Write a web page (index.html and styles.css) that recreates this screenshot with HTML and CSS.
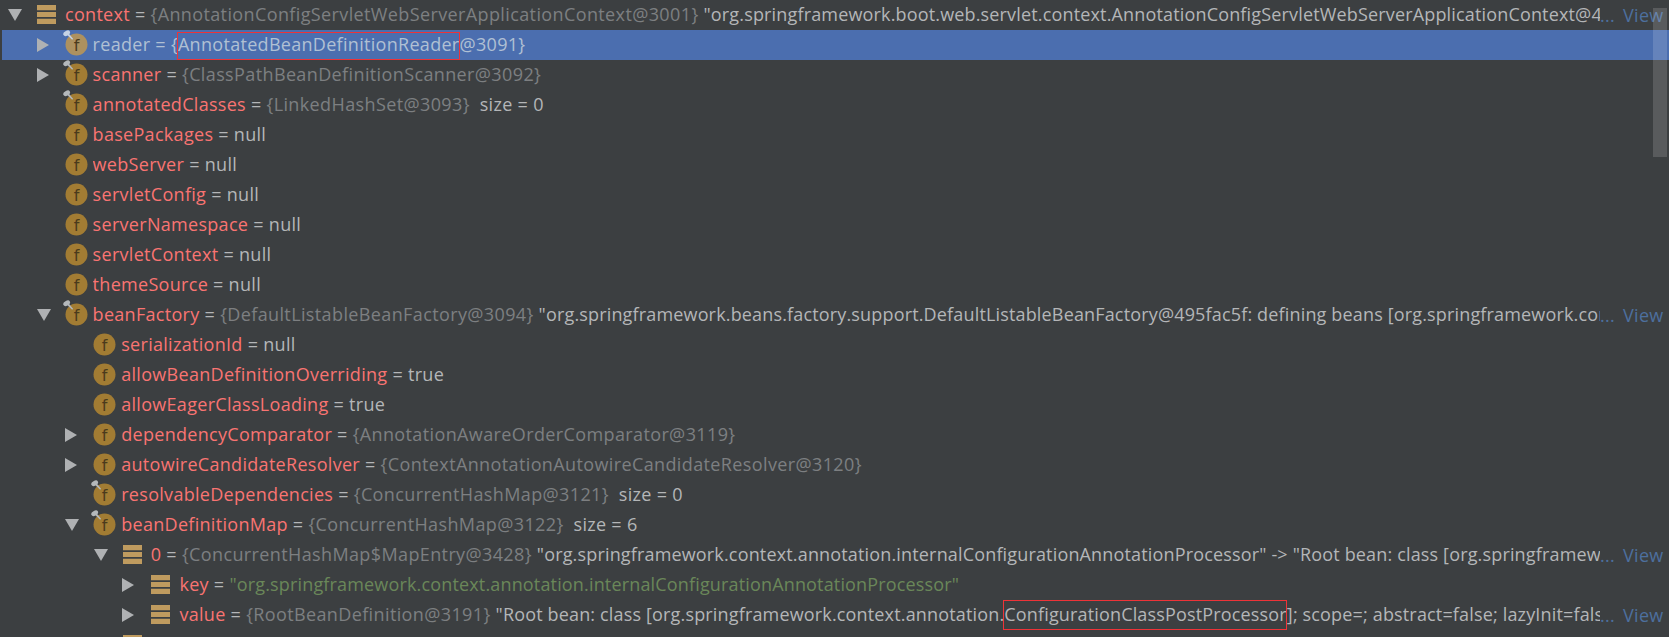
FILE: index.html
```html
<!DOCTYPE html>
<html lang="en">
<head>
<meta charset="utf-8">
<title>Variables</title>
<link rel="stylesheet" href="styles.css">
</head>
<body>
<svg class="defs" width="0" height="0" aria-hidden="true">
  <symbol id="down" viewBox="0 0 14 12"><path d="M0 0H14L7 12Z"/></symbol>
  <symbol id="right" viewBox="0 0 12 14"><path d="M0 0V14L12 7Z"/></symbol>
  <symbol id="stack" viewBox="0 0 20 20"><path d="M0 0H20V5.500H0ZM0 7.300H20V12.700H0ZM0 14.500H20V20H0Z"/></symbol>
  <symbol id="field" viewBox="0 0 24 24"><circle cx="11.500" cy="11.500" r="11"/><text class="f-glyph" x="11.500" y="17.500" text-anchor="middle">f</text></symbol>
  <symbol id="pin" viewBox="0 0 12 12"><ellipse cx="4" cy="3.500" rx="4" ry="2.600" transform="rotate(-30 4 3.500)"/><path d="M4 5 6 3.500 11 9.500 10 10.500z"/></symbol>
</svg>
<main class="tree">
  <div class="row l0"><svg class="arrow dn"><use href="#down"/></svg><svg class="stack"><use href="#stack"/></svg><span class="val"><span class="name">context</span> = <span class="ref">{AnnotationConfigServletWebServerApplicationContext@3001}</span> <span class="s">"org.springframework.boot.web.servlet.context.AnnotationConfigServletWebServerApplicationContext@495fac5f, started on Mon"</span></span><span class="more">...</span><a class="view">View</a></div>

  <div class="row l1 selected"><svg class="arrow rt"><use href="#right"/></svg><span class="ficon"><svg class="field"><use href="#field"/></svg><svg class="pin"><use href="#pin"/></svg></span><span class="val"><span class="name">reader</span> = {<span class="mark mark-high">AnnotatedBeanDefinitionReader</span>@3091}</span></div>

  <div class="row l1"><svg class="arrow rt"><use href="#right"/></svg><span class="ficon"><svg class="field"><use href="#field"/></svg><svg class="pin"><use href="#pin"/></svg></span><span class="val"><span class="name">scanner</span> = <span class="ref">{ClassPathBeanDefinitionScanner@3092}</span></span></div>

  <div class="row l1"><span class="noarrow"></span><span class="ficon"><svg class="field"><use href="#field"/></svg><svg class="pin"><use href="#pin"/></svg></span><span class="val"><span class="name">annotatedClasses</span> = <span class="ref">{LinkedHashSet@3093}</span>&nbsp; size = 0</span></div>

  <div class="row l1"><span class="noarrow"></span><span class="ficon"><svg class="field"><use href="#field"/></svg></span><span class="val"><span class="name">basePackages</span> = null</span></div>

  <div class="row l1"><span class="noarrow"></span><span class="ficon"><svg class="field"><use href="#field"/></svg></span><span class="val"><span class="name">webServer</span> = null</span></div>

  <div class="row l1"><span class="noarrow"></span><span class="ficon"><svg class="field"><use href="#field"/></svg></span><span class="val"><span class="name">servletConfig</span> = null</span></div>

  <div class="row l1"><span class="noarrow"></span><span class="ficon"><svg class="field"><use href="#field"/></svg></span><span class="val"><span class="name">serverNamespace</span> = null</span></div>

  <div class="row l1"><span class="noarrow"></span><span class="ficon"><svg class="field"><use href="#field"/></svg></span><span class="val"><span class="name">servletContext</span> = null</span></div>

  <div class="row l1"><span class="noarrow"></span><span class="ficon"><svg class="field"><use href="#field"/></svg></span><span class="val"><span class="name">themeSource</span> = null</span></div>

  <div class="row l1"><svg class="arrow dn"><use href="#down"/></svg><span class="ficon"><svg class="field"><use href="#field"/></svg><svg class="pin"><use href="#pin"/></svg></span><span class="val"><span class="name">beanFactory</span> = <span class="ref">{DefaultListableBeanFactory@3094}</span> <span class="s">"org.springframework.beans.factory.support.DefaultListableBeanFactory@495fac5f: defining beans [org.springframework.context.annotation"</span></span><span class="more">...</span><a class="view">View</a></div>

  <div class="row l2"><span class="noarrow"></span><span class="ficon"><svg class="field"><use href="#field"/></svg></span><span class="val"><span class="name">serializationId</span> = null</span></div>

  <div class="row l2"><span class="noarrow"></span><span class="ficon"><svg class="field"><use href="#field"/></svg></span><span class="val"><span class="name">allowBeanDefinitionOverriding</span> = true</span></div>

  <div class="row l2"><span class="noarrow"></span><span class="ficon"><svg class="field"><use href="#field"/></svg></span><span class="val"><span class="name">allowEagerClassLoading</span> = true</span></div>

  <div class="row l2"><svg class="arrow rt"><use href="#right"/></svg><span class="ficon"><svg class="field"><use href="#field"/></svg></span><span class="val"><span class="name">dependencyComparator</span> = <span class="ref">{AnnotationAwareOrderComparator@3119}</span></span></div>

  <div class="row l2"><svg class="arrow rt"><use href="#right"/></svg><span class="ficon"><svg class="field"><use href="#field"/></svg></span><span class="val"><span class="name">autowireCandidateResolver</span> = <span class="ref">{ContextAnnotationAutowireCandidateResolver@3120}</span></span></div>

  <div class="row l2"><span class="noarrow"></span><span class="ficon"><svg class="field"><use href="#field"/></svg><svg class="pin"><use href="#pin"/></svg></span><span class="val"><span class="name">resolvableDependencies</span> = <span class="ref">{ConcurrentHashMap@3121}</span>&nbsp; size = 0</span></div>

  <div class="row l2"><svg class="arrow dn"><use href="#down"/></svg><span class="ficon"><svg class="field"><use href="#field"/></svg><svg class="pin"><use href="#pin"/></svg></span><span class="val"><span class="name">beanDefinitionMap</span> = <span class="ref">{ConcurrentHashMap@3122}</span>&nbsp; size = 6</span></div>

  <div class="row l3"><svg class="arrow dn"><use href="#down"/></svg><svg class="stack"><use href="#stack"/></svg><span class="val"><span class="name">0</span> = <span class="ref">{ConcurrentHashMap$MapEntry@3428}</span> <span class="s">"org.springframework.context.annotation.internalConfigurationAnnotationProcessor" -&gt; "Root bean: class [org.springframework.context.annotation"</span></span><span class="more">...</span><a class="view">View</a></div>

  <div class="row l4"><svg class="arrow rt"><use href="#right"/></svg><svg class="stack"><use href="#stack"/></svg><span class="val"><span class="name">key</span> = <span class="str s">"org.springframework.context.annotation.internalConfigurationAnnotationProcessor"</span></span></div>

  <div class="row l4"><svg class="arrow rt"><use href="#right"/></svg><svg class="stack"><use href="#stack"/></svg><span class="val"><span class="name">value</span> = <span class="ref">{RootBeanDefinition@3191}</span> <span class="s">"Root bean: class [org.springframework.context.annotation.<span class="mark mark-low">ConfigurationClassPostProcessor</span>]; scope=; abstract=false; lazyInit=false; autowireMode=0"</span></span><span class="more">...</span><a class="view">View</a></div>

  <div class="row l3"><span class="noarrow"></span><svg class="stack"><use href="#stack"/></svg></div>
</main>
<div class="scrollbar"></div>
</body>
</html>
```
FILE: styles.css
```css
* { box-sizing: border-box; }

html, body {
  margin: 0;
  height: 637px;
  overflow: hidden;
  background: #3c3f41;
}

.defs { position: absolute; }

.tree {
  height: 637px;
  overflow: hidden;
  font-family: "Open Sans", "Noto Sans", sans-serif;
  font-size: 18px;
  letter-spacing: 0.3px;
  color: #b4b6b8;
}

.row {
  display: flex;
  align-items: center;
  height: 30px;
  line-height: 28px;
  margin-left: 2px;
  white-space: nowrap;
}

.l0 { padding-left: 6px; }
.l1 { padding-left: 34.6px; }
.l2 { padding-left: 63.2px; }
.l3 { padding-left: 91.8px; }
.l4 { padding-left: 120.4px; }

.selected {
  background: #4b6eaf;
  color: #b0c0d4;
}

.arrow { flex: none; fill: #afb1b3; }
.arrow.dn { width: 14px; height: 12px; margin-right: 14px; }
.arrow.rt { width: 12px; height: 14px; margin-right: 16px; }
.noarrow { flex: none; width: 28px; }

.stack {
  flex: none;
  width: 19px;
  height: 19px;
  margin: -1px 9px 0 1px;
  fill: #bf9b5f;
}

.ficon {
  flex: none;
  position: relative;
  width: 28px;
  height: 24px;
  display: block;
}

.field {
  display: block;
  width: 24px;
  height: 24px;
  fill: #a27c33;
}

.f-glyph {
  fill: #4a3a1c;
  font-family: "DejaVu Sans", sans-serif;
  font-size: 16px;
  letter-spacing: 0;
}

.pin {
  position: absolute;
  left: -2px;
  top: -3px;
  width: 11px;
  height: 11px;
  fill: #b4b8bb;
}

.selected .field { fill: #ad9160; }
.selected .pin { fill: #c5d3e5; }

.val {
  flex: 1;
  min-width: 0;
  height: 30px;
  overflow: hidden;
}

.name { color: #f97472; }
.selected .name { color: #b0c0d4; }
.ref { color: #7d7f81; letter-spacing: 0.38px; }
.s { letter-spacing: 0.16px; }
.str { color: #6a8759; }

.mark {
  display: inline-block;
  position: relative;
}

.mark::after {
  content: "";
  position: absolute;
  left: -1px;
  right: 0;
  border: 1px solid #ee3338;
}

.mark-high::after { top: 2px; bottom: -2px; }
.mark-low::after { top: 0; bottom: -2px; }

.more {
  flex: none;
  width: 23px;
  color: #4d6f9e;
}

.view {
  flex: none;
  width: 46px;
  color: #4d6f9e;
}

.scrollbar {
  position: absolute;
  left: 1653px;
  top: 8px;
  width: 14px;
  height: 149px;
  background: rgba(255, 255, 255, 0.15);
}
```
